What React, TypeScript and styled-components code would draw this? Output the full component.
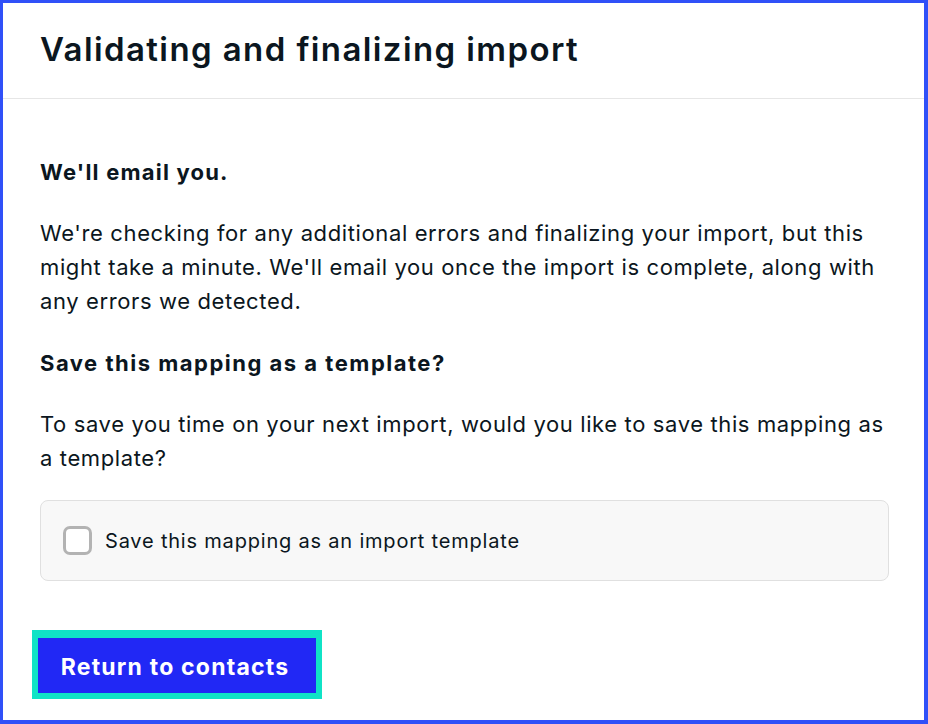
import React, { useState } from 'react'
import styled, { createGlobalStyle } from 'styled-components'

const GlobalStyle = createGlobalStyle`
	html, body {
		margin: 0;
		padding: 0;
		background: #ffffff;
	}
	body {
		font-family: Inter, "Noto Sans", "Liberation Sans", sans-serif;
		color: #0b1620;
		-webkit-font-smoothing: antialiased;
	}
`

const Frame = styled.div`
	box-sizing: border-box;
	height: 724px;
	border: solid #3050f8;
	border-width: 3px 4px 4px 3px;
	background: #ffffff;
	display: flex;
	flex-direction: column;
`

const Header = styled.header`
	height: 96px;
	box-sizing: border-box;
	padding: 0 37px;
	display: flex;
	align-items: center;
	border-bottom: 1px solid #e6e6e6;
`

const Title = styled.h1`
	margin: 0;
	font-size: 33px;
	font-weight: 600;
	letter-spacing: 1.4px;
	padding-bottom: 4px;
`

const Body = styled.main`
	padding: 56px 30px 0 37px;
	display: flex;
	flex-direction: column;
`

const Heading = styled.h2<{ $spacing?: number }>`
	margin: 0 0 27px;
	font-size: 22px;
	line-height: 34px;
	font-weight: 700;
	letter-spacing: ${(p) => p.$spacing ?? 1.2}px;
`

const Text = styled.p`
	margin: 0 0 28px;
	font-size: 22px;
	line-height: 34px;
	font-weight: 400;
	letter-spacing: 0.62px;
`

const OptionBox = styled.label`
	box-sizing: border-box;
	width: 849px;
	height: 81px;
	margin-top: -3px;
	padding: 0 22px;
	display: flex;
	align-items: center;
	gap: 13px;
	background: #f8f8f8;
	border: 1px solid #e0e0e0;
	border-radius: 8px;
	font-size: 20px;
	letter-spacing: 0.8px;
	cursor: pointer;
`

const Box = styled.span<{ $checked: boolean }>`
	box-sizing: border-box;
	width: 29px;
	height: 29px;
	border: 3px solid ${(p) => (p.$checked ? '#2128f5' : '#b3b3b3')};
	background: ${(p) => (p.$checked ? '#2128f5' : '#ffffff')};
	border-radius: 7px;
	display: flex;
	align-items: center;
	justify-content: center;
	flex-shrink: 0;
`

const Actions = styled.div`
	margin-top: 57px;
	display: flex;
`

const PrimaryButton = styled.button`
	box-sizing: border-box;
	height: 55px;
	width: 278px;
	margin-left: -2px;
	padding: 2px 4px 0 0;
	border: none;
	border-radius: 0;
	background: #2128f5;
	color: #ffffff;
	font-family: inherit;
	font-size: 23px;
	font-weight: 700;
	letter-spacing: 1.2px;
	outline: 6px solid #10e3c6;
	outline-offset: 0;
	box-shadow: 0 -2px 0 6px #10e3c6;
	cursor: pointer;
`

export default function App() {
	const [checked, setChecked] = useState(false)

	return (
		<>
			<GlobalStyle />
			<Frame>
				<Header>
					<Title>Validating and finalizing import</Title>
				</Header>
				<Body>
					<Heading>We'll email you.</Heading>
					<Text>
						We're checking for any additional errors and finalizing your import, but this
						might take a minute. We'll email you once the import is complete, along with
						any errors we detected.
					</Text>
					<Heading $spacing={1.5}>Save this mapping as a template?</Heading>
					<Text>
						To save you time on your next import, would you like to save this mapping as
						a template?
					</Text>
					<OptionBox onClick={() => setChecked(!checked)}>
						<Box $checked={checked}>
							{checked && (
								<svg width="16" height="16" viewBox="0 0 16 16" fill="none">
									<path d="M3 8.5l3.2 3L13 4.5" stroke="#fff" strokeWidth="2.4" />
								</svg>
							)}
						</Box>
						Save this mapping as an import template
					</OptionBox>
					<Actions>
						<PrimaryButton>Return to contacts</PrimaryButton>
					</Actions>
				</Body>
			</Frame>
		</>
	)
}
